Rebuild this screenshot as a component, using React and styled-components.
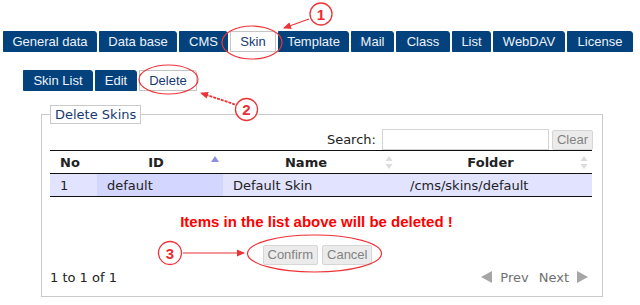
import React from 'react'
import styled, { createGlobalStyle } from 'styled-components'

const GlobalStyle = createGlobalStyle`
body {
    margin: 0;
    background: #fff;
    font-family: "DejaVu Sans", Verdana, sans-serif;
}
`

// widths taken from the reference tab strip
const mainTabs = [
    ['General data', 94], ['Data base', 78], ['CMS', 49], ['Skin', 46], ['Template', 71],
    ['Mail', 43], ['Class', 54], ['List', 39], ['WebDAV', 72], ['License', 66],
]
const subTabs = [['Skin List', 70], ['Edit', 42], ['Delete', 58]]

const SortIcon = ({ dir }) => (
    <SortMark width="8" height="16" viewBox="0 0 8 16">
        {dir === 'asc' ? (
            <path d="M0 7 L4 1 L8 7 Z" fill="#8c8fe0" />
        ) : (
            <>
                <path d="M0.5 6 L4 1 L7.5 6 Z" fill="#dcdcdc" />
                <path d="M0.5 9 L4 14 L7.5 9 Z" fill="#dcdcdc" />
            </>
        )}
    </SortMark>
)

const Annotations = () => (
    <Overlay width="640" height="305" viewBox="0 0 640 305">
        <defs>
            <marker id="head" markerWidth="8" markerHeight="8" refX="7" refY="4" orient="auto" markerUnits="userSpaceOnUse">
                <path d="M0 0.5 L8 4 L0 7.5 Z" fill="#ee3338" />
            </marker>
        </defs>
        <g fill="none" stroke="#ee3338" strokeWidth="1.2">
            <ellipse cx="252" cy="42.5" rx="30" ry="16.5" />
            <ellipse cx="168.5" cy="79.5" rx="29.5" ry="14.5" />
            <ellipse cx="314.5" cy="253.5" rx="67" ry="18.5" />
            <line x1="309" y1="19" x2="284" y2="28" markerEnd="url(#head)" />
            <line x1="235" y1="104.5" x2="201" y2="93" strokeWidth="1.8" strokeDasharray="3 1" markerEnd="url(#head)" />
            <line x1="183" y1="253" x2="244" y2="253" markerEnd="url(#head)" />
        </g>
        <g fill="#fff" stroke="#ee3338" strokeWidth="1.3">
            <circle cx="321" cy="14" r="11" />
            <circle cx="246.5" cy="109.5" r="11" />
            <circle cx="170" cy="253" r="11.5" />
        </g>
        <g fill="#ee2a2f" fontFamily="'Liberation Sans', Arial, sans-serif" fontWeight="bold" fontSize="15" textAnchor="middle">
            <text x="321" y="19.5">1</text>
            <text x="246.5" y="115">2</text>
            <text x="170" y="258.5">3</text>
        </g>
    </Overlay>
)

const App = () => {
    return (
        <Page>
            <GlobalStyle />
            <TabBar>
                {mainTabs.map(([t, w]) => (
                    <Tab key={t} $w={w} $active={t === 'Skin'}>{t}</Tab>
                ))}
            </TabBar>
            <SubTabBar>
                {subTabs.map(([t, w]) => (
                    <Tab key={t} $w={w} $active={t === 'Delete'}>{t}</Tab>
                ))}
            </SubTabBar>
            <Box>
                <Legend>Delete Skins</Legend>
                <SearchRow>
                    <label>Search:</label>
                    <SearchInput type="text" />
                    <GrayButton>Clear</GrayButton>
                </SearchRow>
                <Table>
                    <colgroup>
                        <col style={{ width: 47 }} />
                        <col style={{ width: 126 }} />
                        <col style={{ width: 174 }} />
                        <col style={{ width: 195 }} />
                    </colgroup>
                    <thead>
                        <tr>
                            <Th $align="left">No</Th>
                            <Th>ID<SortIcon dir="asc" /></Th>
                            <Th>Name<SortIcon /></Th>
                            <Th>Folder<SortIcon /></Th>
                        </tr>
                    </thead>
                    <tbody>
                        <tr>
                            <Td>1</Td>
                            <Td $sorted>default</Td>
                            <Td>Default Skin</Td>
                            <Td $pad={13}>/cms/skins/default</Td>
                        </tr>
                    </tbody>
                </Table>
                <Warning>Items in the list above will be deleted !</Warning>
                <Actions>
                    <GrayButton>Confirm</GrayButton>
                    <GrayButton>Cancel</GrayButton>
                </Actions>
                <Footer>
                    <span>1 to 1 of 1</span>
                    <Pager>
                        <Arrow width="11" height="12" viewBox="0 0 11 12"><path d="M11 0 L0 6 L11 12 Z" /></Arrow>
                        <span>Prev</span>
                        <NextLabel>Next</NextLabel>
                        <Arrow width="11" height="12" viewBox="0 0 11 12"><path d="M0 0 L11 6 L0 12 Z" /></Arrow>
                    </Pager>
                </Footer>
            </Box>
            <Annotations />
        </Page>
    )
}

export default App

const Page = styled.div`
position: relative;
width: 640px;
height: 305px;
overflow: hidden;
padding-top: 31px;
box-sizing: border-box;
`

const TabBar = styled.div`
display: flex;
gap: 2px;
padding-left: 3px;
`

const SubTabBar = styled(TabBar)`
margin-top: 18px;
padding-left: 23px;
`

const Tab = styled.div`
flex: none;
width: ${p => p.$w}px;
white-space: nowrap;
text-align: center;
height: 21px;
box-sizing: border-box;
line-height: 19px;
font-family: "Liberation Sans", Arial, sans-serif;
font-size: 13px;
border: 1px solid ${p => (p.$active ? '#c4c4c4' : '#03427c')};
border-radius: 0 3px 0 0;
background: ${p => (p.$active ? '#fff' : '#03427c')};
color: ${p => (p.$active ? '#173a73' : '#eef2fa')};
`

const Box = styled.fieldset`
margin: 14px 0 0 41px;
width: 562px;
box-sizing: border-box;
padding: 0 10px 9px 8px;
border: 1px solid #cacaca;
min-inline-size: auto;
`

const Legend = styled.legend`
padding: 0 4px;
border: 1px solid #cacaca;
color: #173a73;
font-size: 13px;
line-height: 17px;
`

const SearchRow = styled.div`
display: flex;
justify-content: flex-end;
align-items: center;
margin-top: 5px;
margin-right: -1px;
height: 21px;
font-size: 13px;
color: #222;

label {
    margin-right: 6px;
}
`

const SearchInput = styled.input`
width: 167px;
height: 21px;
box-sizing: border-box;
border: 1px solid #d4d4d4;
margin: 0 3px 0 0;
padding: 0 3px;
`

const GrayButton = styled.button`
height: 20px;
box-sizing: border-box;
padding: 0 4px;
margin: 0;
background: #ebebeb;
border: 1px solid #d6d6d6;
border-radius: 2px;
color: #828282;
font-family: "Liberation Sans", Arial, sans-serif;
font-size: 13px;
line-height: 18px;
`

const Table = styled.table`
width: 100%;
border-collapse: collapse;
table-layout: fixed;
font-size: 13px;
color: #222;
`

const Th = styled.th`
position: relative;
height: 22px;
padding: 0 18px 0 10px;
text-align: ${p => p.$align || 'center'};
font-weight: bold;
border-top: 1px solid #111;
border-bottom: 1px solid #111;
`

const SortMark = styled.svg`
position: absolute;
right: 4px;
top: 4px;
`

const Td = styled.td`
height: 22px;
padding: 0 0 0 ${p => p.$pad || 10}px;
background: ${p => (p.$sorted ? '#d3d6ff' : '#e2e4ff')};
border-bottom: 1px solid #111;
white-space: nowrap;
`

const Warning = styled.div`
margin-top: 16px;
padding-right: 9px;
text-align: center;
color: #ff0000;
font-family: "Liberation Sans", Arial, sans-serif;
font-weight: bold;
font-size: 15px;
line-height: 17px;
`

const Actions = styled.div`
display: flex;
justify-content: center;
gap: 4px;
margin-top: 15px;
padding-right: 7px;
`

const Footer = styled.div`
display: flex;
justify-content: space-between;
align-items: center;
margin-top: 2px;
height: 20px;
font-size: 13px;
color: #222;
`

const Pager = styled.div`
display: flex;
align-items: center;
gap: 8px;
margin-right: 4px;
color: #6f6f6f;
`

const NextLabel = styled.span`
margin-left: 2px;
`

const Arrow = styled.svg`
fill: #a6a6a6;
`

const Overlay = styled.svg`
position: absolute;
top: 0;
left: 0;
pointer-events: none;
`
